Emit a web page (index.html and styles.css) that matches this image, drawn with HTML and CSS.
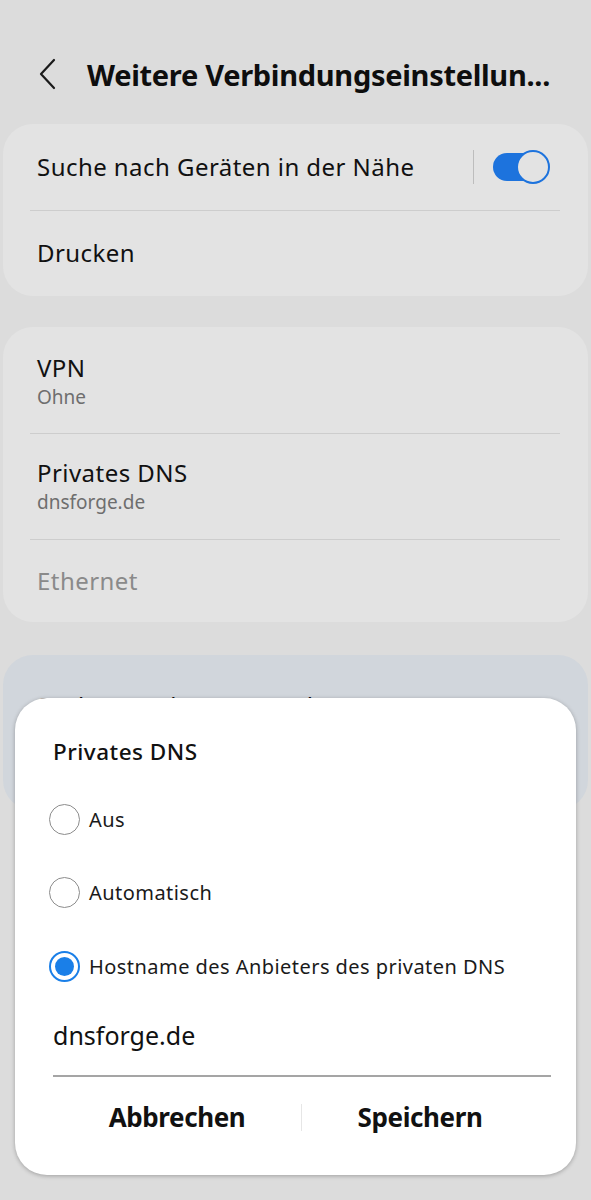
FILE: index.html
```html
<!DOCTYPE html>
<html lang="de">
<head>
<meta charset="utf-8">
<title>Weitere Verbindungseinstellungen</title>
<link rel="stylesheet" href="styles.css">
</head>
<body>
<header class="header">
  <svg class="back" width="20" height="32" viewBox="0 0 20 32"><path d="M16 2 L3 16 L16 30" fill="none" stroke="#1a1a1a" stroke-width="2.2" stroke-linecap="round" stroke-linejoin="round"/></svg>
  <h1 class="title">Weitere Verbindungseinstellun...</h1>
</header>

<section class="card">
  <div class="row row-a">
    <span class="label grow">Suche nach Geräten in der Nähe</span>
    <span class="vdiv"></span>
    <span class="toggle"><span class="track"></span><span class="thumb"></span></span>
  </div>
  <div class="sep"></div>
  <div class="row row-b"><span class="label">Drucken</span></div>
</section>

<section class="card card2">
  <div class="row row-c">
    <div class="label">VPN</div>
    <div class="sub">Ohne</div>
  </div>
  <div class="sep"></div>
  <div class="row row-d">
    <div class="label">Privates DNS</div>
    <div class="sub">dnsforge.de</div>
  </div>
  <div class="sep"></div>
  <div class="row row-e"><span class="label disabled">Ethernet</span></div>
</section>

<section class="card card3">
  <div class="label">Suchen nach etwas Anderem?</div>
</section>

<div class="dialog">
  <div class="dlg-title">Privates DNS</div>
  <div class="opt"><span class="radio"></span><span class="opt-label">Aus</span></div>
  <div class="opt"><span class="radio"></span><span class="opt-label">Automatisch</span></div>
  <div class="opt"><span class="radio on"></span><span class="opt-label">Hostname des Anbieters des privaten DNS</span></div>
  <div class="input">dnsforge.de</div>
  <div class="buttons">
    <span class="btn">Abbrechen</span>
    <span class="bdiv"></span>
    <span class="btn">Speichern</span>
  </div>
</div>
</body>
</html>
```

FILE: styles.css
```css
* { box-sizing: border-box; }
html, body { margin: 0; padding: 0; }
body {
  background: #dcdcdc;
  font-family: "Noto Sans", Roboto, sans-serif;
  color: #111;
  width: 591px;
  height: 1200px;
  overflow: hidden;
}
.header {
  margin-top: 25px;
  height: 98px;
  display: flex;
  align-items: center;
  padding-left: 38px;
}
.back { display: block; margin-right: 29px; }
.title {
  margin: 0;
  font-size: 29px;
  font-weight: 700;
  letter-spacing: -0.3px;
  color: #0e0e0e;
  white-space: nowrap;
}
.card {
  margin: 1px 3px 0;
  background: #e3e3e3;
  border-radius: 30px;
}
.card2 { margin-top: 31px; }
.card3 {
  margin-top: 33px;
  background: #d1d6dc;
  height: 155px;
  padding: 36px 34px 0;
}
.row {
  display: flex;
  align-items: center;
  padding: 0 34px;
}
.row-a { height: 86px; }
.row-b { height: 85px; padding-bottom: 2px; }
.row-c, .row-d { flex-direction: column; align-items: flex-start; justify-content: center; }
.row-c { height: 106px; padding-top: 3px; }
.row-d { height: 105px; padding-top: 1px; }
.row-e { height: 82px; }
.label {
  font-size: 24px;
  line-height: 30px;
  color: #111;
  letter-spacing: 0.45px;
}
.grow { flex: 1; }
.disabled { color: #8a8a8a; }
.sub {
  font-size: 19px;
  line-height: 28px;
  color: #6e6e6e;
}
.sep {
  height: 1px;
  background: #cdcdcd;
  margin: 0 28px 0 27px;
}
.vdiv {
  width: 1px;
  height: 34px;
  background: #bdbdbd;
  margin-right: 19px;
}
.toggle {
  position: relative;
  width: 57px;
  height: 34px;
  margin-right: 4px;
}
.track {
  position: absolute;
  left: 0;
  top: 3px;
  width: 50px;
  height: 28px;
  border-radius: 14px;
  background: #1d73dd;
}
.thumb {
  position: absolute;
  right: 0;
  top: 0;
  width: 34px;
  height: 34px;
  border-radius: 50%;
  background: #e3e3e3;
  border: 2px solid #1d73dd;
}
.dialog {
  position: absolute;
  left: 15px;
  top: 698px;
  width: 561px;
  height: 477px;
  background: #fff;
  border-radius: 32px;
  box-shadow: 0 1px 4px rgba(0,0,0,0.28);
  padding-top: 39px;
}
.dlg-title {
  padding-left: 38px;
  font-size: 22.5px;
  line-height: 30px;
  font-weight: 500;
  letter-spacing: 0.5px;
  margin-bottom: 15px;
}
.opt {
  height: 74px;
  display: flex;
  align-items: center;
  padding-left: 34px;
}
.opt:nth-child(3) { height: 73px; }
.radio {
  width: 31px;
  height: 31px;
  border-radius: 50%;
  border: 1.5px solid #8c8c8c;
  margin-right: 9px;
  flex: none;
  display: flex;
  align-items: center;
  justify-content: center;
}
.radio.on { border: 2px solid #1a7fe8; }
.radio.on::after {
  content: "";
  width: 19px;
  height: 19px;
  border-radius: 50%;
  background: #1a7fe8;
}
.opt-label {
  font-size: 20px;
  color: #1a1a1a;
  letter-spacing: 0.45px;
}
.input {
  margin: 0 25px 0 38px;
  padding: 15px 0 23px;
  font-size: 25px;
  line-height: 34px;
  border-bottom: 2px solid #a5a5a5;
  color: #111;
}
.buttons {
  margin-left: 38px;
  height: 80px;
  display: grid;
  grid-template-columns: 248px 1px 236px;
  align-items: center;
}
.btn {
  text-align: center;
  font-size: 26px;
  font-weight: 700;
  letter-spacing: -0.4px;
  color: #111;
}
.bdiv {
  height: 27px;
  background: #e6e6e6;
}
```
